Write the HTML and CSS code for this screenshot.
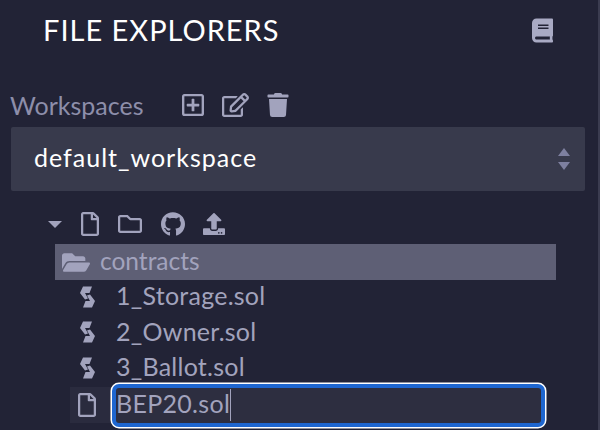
FILE: index.html
```html
<!DOCTYPE html>
<html lang="en">
<head>
<meta charset="utf-8">
<title>File Explorers</title>
<link rel="stylesheet" href="styles.css">
</head>
<body>
<div class="panel">
  <header class="head">
    <h1 class="title">FILE EXPLORERS</h1>
    <svg class="book" viewBox="0 0 448 512"><path d="M448 360V24c0-13.300-10.700-24-24-24H96C43 0 0 43 0 96v320c0 53 43 96 96 96h328c13.300 0 24-10.700 24-24v-16c0-7.500-3.500-14.300-8.900-18.700-4.200-15.400-4.200-59.300 0-74.700 5.400-4.300 8.900-11.100 8.900-18.600zM128 134c0-3.300 2.700-6 6-6h212c3.300 0 6 2.700 6 6v20c0 3.300-2.700 6-6 6H134c-3.300 0-6-2.700-6-6v-20zm0 64c0-3.300 2.700-6 6-6h212c3.300 0 6 2.700 6 6v20c0 3.300-2.700 6-6 6H134c-3.300 0-6-2.700-6-6v-20zm253.400 250H96c-17.700 0-32-14.300-32-32 0-17.600 14.400-32 32-32h285.400c-1.900 17.100-1.900 46.900 0 64z"/></svg>
  </header>
  <div class="ws-row">
    <span class="ws-label">Workspaces</span>
    <span class="ws-icons">
      <svg class="ic-plus" viewBox="0 32 448 448"><path d="M352 240v32c0 6.600-5.400 12-12 12h-88v88c0 6.600-5.400 12-12 12h-32c-6.600 0-12-5.400-12-12v-88h-88c-6.600 0-12-5.400-12-12v-32c0-6.600 5.400-12 12-12h88v-88c0-6.600 5.400-12 12-12h32c6.600 0 12 5.400 12 12v88h88c6.600 0 12 5.400 12 12zm96-160v352c0 26.500-21.500 48-48 48H48c-26.500 0-48-21.500-48-48V80c0-26.500 21.500-48 48-48h352c26.500 0 48 21.500 48 48zm-48 346V86c0-3.300-2.700-6-6-6H54c-3.300 0-6 2.700-6 6v340c0 3.300 2.700 6 6 6h340c3.300 0 6-2.700 6-6z"/></svg>
      <svg class="ic-edit" viewBox="0 0 576 512"><path d="M402.300 344.900l32-32c5-5 13.700-1.500 13.700 5.700V464c0 26.500-21.500 48-48 48H48c-26.500 0-48-21.500-48-48V112c0-26.500 21.500-48 48-48h273.500c7.100 0 10.700 8.600 5.700 13.700l-32 32c-1.500 1.500-3.500 2.300-5.700 2.300H48v352h352V350.500c0-2.100.8-4.100 2.300-5.600zm156.600-201.800L296.300 405.700l-90.400 10c-26.200 2.900-48.500-19.200-45.600-45.600l10-90.400L432.900 17.100c22.900-22.900 59.900-22.900 82.700 0l43.200 43.200c22.900 22.900 22.900 60 .1 82.800zM460.100 174L402 115.900 216.200 301.800l-7.300 65.300 65.300-7.300L460.100 174zm64.800-79.700l-43.200-43.200c-4.100-4.100-10.800-4.100-14.800 0L436 82l58.100 58.100 30.900-30.900c4-4.200 4-10.800-.1-14.900z"/></svg>
      <svg class="ic-trash" viewBox="0 0 448 512"><path d="M432 32H312l-9.400-18.700A24 24 0 0 0 281.100 0H166.800a23.720 23.720 0 0 0-21.400 13.300L136 32H16A16 16 0 0 0 0 48v32a16 16 0 0 0 16 16h416a16 16 0 0 0 16-16V48a16 16 0 0 0-16-16zM53.200 467a48 48 0 0 0 47.900 45h245.800a48 48 0 0 0 47.900-45L416 128H32z"/></svg>
    </span>
  </div>
  <div class="select">
    <span class="select-text">default_workspace</span>
    <span class="arrows"><i class="arrow-up"></i><i class="arrow-down"></i></span>
  </div>
  <div class="tools">
    <i class="caret"></i>
    <svg class="ic-file" viewBox="0 0 384 512"><path d="M369.900 97.900L286 14C277 5 264.800-.1 252.100-.1H48C21.500 0 0 21.500 0 48v416c0 26.500 21.500 48 48 48h288c26.500 0 48-21.500 48-48V131.900c0-12.700-5.100-25-14.100-34zM332.100 128H256V51.900l76.100 76.100zM48 464V48h160v104c0 13.300 10.700 24 24 24h104v288H48z"/></svg>
    <svg class="ic-folder" viewBox="0 64 512 384"><path d="M464 128H272l-54.630-54.630c-6-6-14.140-9.370-22.630-9.370H48C21.490 64 0 85.490 0 112v288c0 26.510 21.490 48 48 48h416c26.510 0 48-21.490 48-48V176c0-26.510-21.490-48-48-48zm0 272H48V112h140.120l54.630 54.630c6 6 14.140 9.370 22.630 9.370H464v224z"/></svg>
    <svg class="ic-github" viewBox="0 8 496 488"><path d="M244.800 8C106.100 8 0 113.300 0 252c0 110.900 69.800 205.800 169.500 239.200 12.800 2.300 17.300-5.600 17.300-12.100 0-6.200-.3-40.400-.3-61.400 0 0-70 15-84.700-29.800 0 0-11.400-29.100-27.800-36.600 0 0-22.900-15.700 1.600-15.400 0 0 24.900 2 38.600 25.800 21.900 38.600 58.600 27.500 72.900 20.900 2.300-16 8.800-27.100 16-33.700-55.900-6.200-112.300-14.300-112.300-110.500 0-27.500 7.600-41.300 23.600-58.900-2.600-6.500-11.100-33.300 2.600-67.900 20.900-6.500 69 27 69 27 20-5.600 41.500-8.500 62.800-8.500s42.800 2.900 62.800 8.500c0 0 48.100-33.600 69-27 13.700 34.700 5.200 61.400 2.600 67.900 16 17.700 25.800 31.500 25.800 58.900 0 96.500-58.900 104.200-114.800 110.500 9.200 7.900 17 22.900 17 46.400 0 33.700-.3 75.400-.3 83.600 0 6.500 4.600 14.400 17.300 12.100C428.200 457.800 496 362.900 496 252 496 113.300 383.500 8 244.800 8z"/></svg>
    <svg class="ic-upload" viewBox="0 0 512 512"><path d="M296 384h-80c-13.300 0-24-10.700-24-24V192h-87.700c-17.800 0-26.700-21.500-14.100-34.100L242.300 5.700c7.500-7.500 19.800-7.500 27.300 0l152.200 152.200c12.600 12.600 3.700 34.100-14.100 34.100H320v168c0 13.300-10.700 24-24 24zm216-8v112c0 13.300-10.700 24-24 24H24c-13.300 0-24-10.700-24-24V376c0-13.300 10.700-24 24-24h136v8c0 30.900 25.100 56 56 56h80c30.900 0 56-25.100 56-56v-8h136c13.300 0 24 10.700 24 24zm-124 88c0-11-9-20-20-20s-20 9-20 20 9 20 20 20 20-9 20-20zm64 0c0-11-9-20-20-20s-20 9-20 20 9 20 20 20 20-9 20-20z"/></svg>
  </div>
  <div class="folder-row">
    <svg class="ic-open" viewBox="0 64 576 384"><path d="M572.694 292.093L500.270 416.248A63.997 63.997 0 0 1 444.989 448H45.025c-18.523 0-30.064-20.093-20.731-36.093l72.424-124.155A64 64 0 0 1 152 256h399.964c18.523 0 30.064 20.093 20.730 36.093zM152 224h328v-48c0-26.510-21.490-48-48-48H272l-64-64H48C21.490 64 0 85.490 0 112v278.046l69.077-118.418C86.214 242.250 117.989 224 152 224z"/></svg>
    <span class="row-text">contracts</span>
  </div>
  <ul class="files">
    <li class="file">
      <svg class="ic-sol" viewBox="0 0 15 22"><path d="M3 .5h9L9.500 7H5l3 5.500-3 1L0 7zM12 21.500H3L5.500 15H10L7 9.500l3-1L15 15z"/></svg>
      <span class="file-text">1_Storage.sol</span>
    </li>
    <li class="file">
      <svg class="ic-sol" viewBox="0 0 15 22"><path d="M3 .5h9L9.500 7H5l3 5.500-3 1L0 7zM12 21.500H3L5.500 15H10L7 9.500l3-1L15 15z"/></svg>
      <span class="file-text">2_Owner.sol</span>
    </li>
    <li class="file">
      <svg class="ic-sol" viewBox="0 0 15 22"><path d="M3 .5h9L9.500 7H5l3 5.500-3 1L0 7zM12 21.500H3L5.500 15H10L7 9.500l3-1L15 15z"/></svg>
      <span class="file-text">3_Ballot.sol</span>
    </li>
  </ul>
  <div class="new-row">
    <span class="new-icon">
      <svg class="ic-file" viewBox="0 0 384 512"><path d="M369.900 97.900L286 14C277 5 264.800-.1 252.100-.1H48C21.500 0 0 21.500 0 48v416c0 26.500 21.500 48 48 48h288c26.500 0 48-21.500 48-48V131.900c0-12.700-5.100-25-14.100-34zM332.100 128H256V51.900l76.100 76.100zM48 464V48h160v104c0 13.300 10.700 24 24 24h104v288H48z"/></svg>
    </span>
    <div class="name-input"><span class="typed">BEP20.sol</span><i class="cursor"></i></div>
  </div>
</div>
</body>
</html>
```
FILE: styles.css
```css
* { box-sizing: border-box; }
html, body { margin: 0; height: 430px; overflow: hidden; }
body { background: #222336; font-family: "Lato", "Open Sans", sans-serif; color: #a2a3bd; }
svg { fill: currentColor; display: block; flex: none; }
i { display: block; }

.panel { width: 600px; height: 430px; border-right: 2px solid #3b3c50; overflow: hidden; }

.head { display: flex; align-items: center; justify-content: space-between; height: 38px; margin-top: 11px; padding: 0 45px 0 43px; }
.title { margin: 0; font-size: 29px; font-weight: 400; letter-spacing: 1px; color: #fff; line-height: 38px; }
.book { width: 21px; height: 25px; color: #a9aac4; }

.ws-row { display: flex; align-items: center; height: 38px; margin-top: 37px; padding-left: 10px; }
.ws-label { width: 172px; font-size: 25px; color: #8d8eaa; }
.ws-icons { display: flex; align-items: center; gap: 18px; color: #a2a3bd; }
.ic-plus { width: 22px; height: 22px; }
.ic-edit { width: 27px; height: 24px; }
.ic-trash { width: 22px; height: 24px; }

.select { display: flex; align-items: center; justify-content: space-between; width: 574px; height: 64px; margin: 3px 0 0 11px; padding: 0 15px 0 23px; background: #383a4c; border-radius: 2px; }
.select-text { padding-bottom: 4px; font-size: 25px; letter-spacing: 1px; color: #fff; }
.arrows { display: flex; flex-direction: column; gap: 6px; }
.arrow-up { border: 6px solid transparent; border-top: 0; border-bottom: 8px solid #7e80a0; }
.arrow-down { border: 6px solid transparent; border-bottom: 0; border-top: 8px solid #7e80a0; }

.tools { display: flex; align-items: center; height: 36px; margin-top: 15px; padding-left: 48px; }
.caret { width: 0; height: 0; border: 7px solid transparent; border-bottom: 0; border-top: 7px solid #a2a3bd; margin-right: 19px; }
.tools .ic-file { margin-right: 19px; }
.ic-file { width: 18px; height: 24px; }
.ic-folder { width: 24px; height: 18px; margin-right: 19px; }
.ic-github { width: 24px; height: 24px; margin-right: 18px; }
.ic-upload { width: 22px; height: 22px; }

.folder-row { display: flex; align-items: center; gap: 10px; width: 501px; height: 36px; margin: 2px 0 0 55px; padding-left: 7px; background: #5e5f75; font-size: 24.500px; }
.row-text { padding-bottom: 4px; }
.ic-open { width: 28px; height: 19px; }

.files { list-style: none; margin: -1px 0 0; padding: 0 0 0 80px; }
.file { display: flex; align-items: center; gap: 21px; height: 35.500px; font-size: 25px; letter-spacing: .25px; }
.file-text { padding-bottom: 3px; }
.ic-sol { width: 15px; height: 22px; }

.new-row { display: flex; align-items: center; height: 43px; margin: -2px 0 0 70px; }
.new-icon { display: flex; align-items: center; width: 42px; height: 36px; padding-left: 8px; background: #2a2b3e; }
.name-input { display: flex; align-items: center; width: 433px; height: 43px; padding-left: 0; background: #2d2e40; border: 4px solid #1e66d0; border-radius: 7px; box-shadow: 0 0 0 1.500px #fff; font-size: 25px; letter-spacing: .3px; }
.typed { padding-bottom: 3px; line-height: 1; }
.cursor { width: 1px; height: 32px; background: #a2a3bd; }
```
